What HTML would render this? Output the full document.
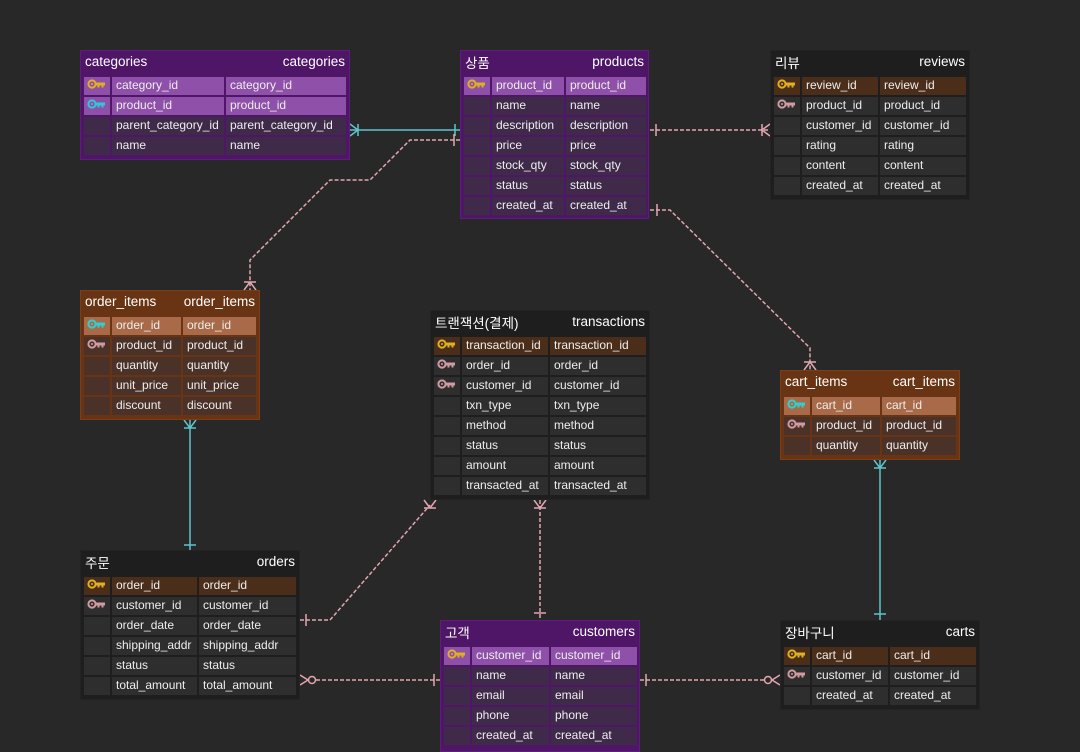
<!DOCTYPE html>
<html><head><meta charset="utf-8"><style>
*{margin:0;padding:0;box-sizing:border-box}
body{width:1080px;height:752px;background:#282828;position:relative;overflow:hidden;font-family:"Liberation Sans","Noto Sans CJK KR",sans-serif;font-size:12px;color:#eee}
.t{position:absolute;padding:0 3px 3px 3px}
.h{height:24px;display:flex;justify-content:space-between;align-items:center;font-size:13.5px;color:#fff;padding:0 1px 3px 1px;margin-bottom:2px}
.r{display:grid;gap:2px;height:18px;margin-bottom:2px}
.r div{line-height:16px;padding-left:4px;white-space:nowrap;overflow:hidden}
.r div:first-child{padding-left:3px;padding-top:1px}
.P{background:#4f1668;border:1px solid #5e1c7c}
.P .r div{background:#3f2a4a}
.P .r.k div{background:#8e50a8}
.D{background:#1e1e1e;border:1px solid #232323}
.D .r div{background:#2e2e2e}
.D .r.k div{background:#4a2e1a}
.O{background:#693413;border:1px solid #7a3e18}
.O .r div{background:#4a3229}
.O .r.k div{background:#a86a48}
svg.ln{position:absolute;left:0;top:0}
</style></head><body>
<svg width="0" height="0" style="position:absolute"><defs>
<symbol id="key" viewBox="0 0 20 12"><circle cx="5" cy="6" r="3.6" fill="none" stroke="currentColor" stroke-width="2"/><circle cx="5" cy="6" r="1" fill="currentColor"/><path d="M8.5 4.5H18V7.5H16.5V9.5H14.5V7.5H12.5V9.5H10.5V7.5H8.5Z" fill="currentColor"/></symbol>
</defs></svg>

<svg class="ln" width="1080" height="752" fill="none" stroke-width="1.5">
<g stroke="#5ec4cc">
<path d="M350 130H460"/><path d="M455 124V136"/><path d="M358 130L350 124M358 130L350 136M358 124V136"/>
<path d="M190 420V550"/><path d="M184 545H196"/><path d="M190 428L184 420M190 428L196 420M184 428H196"/>
<path d="M880 460V620"/><path d="M874 614H886"/><path d="M880 468L874 460M880 468L886 460M874 468H886"/>
</g>
<g stroke="#e2a6b0">
<path d="M460 140H410L370 180H330L250 260V290" stroke-dasharray="4 2"/><path d="M454 134V146"/><path d="M250 282L244 290M250 282L256 290M244 282H256"/>
<path d="M650 130H770" stroke-dasharray="4 2"/><path d="M656 124V136"/><path d="M762 130L770 124M762 130L770 136M762 124V136"/>
<path d="M650 210H670L810 348V370" stroke-dasharray="4 2"/><path d="M657 204V216"/><path d="M810 362L804 370M810 362L816 370M804 362H816"/>
<path d="M300 620H330L430 505" stroke-dasharray="4 2"/><path d="M306 614V626"/><path d="M430 508L424 500M430 508L436 500M424 508H436"/>
<path d="M540 500V620" stroke-dasharray="4 2"/><path d="M534 613H546"/><path d="M540 508L534 500M540 508L546 500M534 508H546"/>
<path d="M316 680H440" stroke-dasharray="4 2"/><path d="M434 674V686"/><circle cx="312" cy="680" r="3.5"/><path d="M308 680L300 675M308 680L300 685"/>
<path d="M640 680H764" stroke-dasharray="4 2"/><path d="M646 674V686"/><circle cx="768" cy="680" r="3.5"/><path d="M772 680L780 675M772 680L780 685"/>
</g>
</svg>

<!-- categories -->
<div class="t P" style="left:80px;top:50px;width:270px;height:110px">
<div class="h"><span>categories</span><span>categories</span></div>
<div class="r k" style="grid-template-columns:26px 112px 120px"><div><svg width="20" height="12" style="color:#e0b020"><use href="#key"/></svg></div><div>category_id</div><div>category_id</div></div>
<div class="r k" style="grid-template-columns:26px 112px 120px"><div><svg width="20" height="12" style="color:#30c8d8"><use href="#key"/></svg></div><div>product_id</div><div>product_id</div></div>
<div class="r" style="grid-template-columns:26px 112px 120px"><div></div><div>parent_category_id</div><div>parent_category_id</div></div>
<div class="r" style="grid-template-columns:26px 112px 120px"><div></div><div>name</div><div>name</div></div>
</div>

<!-- products -->
<div class="t P" style="left:460px;top:50px;width:189px;height:169px">
<div class="h"><span>상품</span><span>products</span></div>
<div class="r k" style="grid-template-columns:26px 72px 80px"><div><svg width="20" height="12" style="color:#e0b020"><use href="#key"/></svg></div><div>product_id</div><div>product_id</div></div>
<div class="r" style="grid-template-columns:26px 72px 80px"><div></div><div>name</div><div>name</div></div>
<div class="r" style="grid-template-columns:26px 72px 80px"><div></div><div>description</div><div>description</div></div>
<div class="r" style="grid-template-columns:26px 72px 80px"><div></div><div>price</div><div>price</div></div>
<div class="r" style="grid-template-columns:26px 72px 80px"><div></div><div>stock_qty</div><div>stock_qty</div></div>
<div class="r" style="grid-template-columns:26px 72px 80px"><div></div><div>status</div><div>status</div></div>
<div class="r" style="grid-template-columns:26px 72px 80px"><div></div><div>created_at</div><div>created_at</div></div>
</div>

<!-- reviews -->
<div class="t D" style="left:770px;top:50px;width:200px;height:150px">
<div class="h"><span>리뷰</span><span>reviews</span></div>
<div class="r k" style="grid-template-columns:26px 76px 86px"><div><svg width="20" height="12" style="color:#e0b020"><use href="#key"/></svg></div><div>review_id</div><div>review_id</div></div>
<div class="r" style="grid-template-columns:26px 76px 86px"><div><svg width="20" height="12" style="color:#d09aa2"><use href="#key"/></svg></div><div>product_id</div><div>product_id</div></div>
<div class="r" style="grid-template-columns:26px 76px 86px"><div></div><div>customer_id</div><div>customer_id</div></div>
<div class="r" style="grid-template-columns:26px 76px 86px"><div></div><div>rating</div><div>rating</div></div>
<div class="r" style="grid-template-columns:26px 76px 86px"><div></div><div>content</div><div>content</div></div>
<div class="r" style="grid-template-columns:26px 76px 86px"><div></div><div>created_at</div><div>created_at</div></div>
</div>

<!-- order_items -->
<div class="t O" style="left:80px;top:290px;width:180px;height:130px">
<div class="h"><span>order_items</span><span>order_items</span></div>
<div class="r k" style="grid-template-columns:26px 69px 73px"><div><svg width="20" height="12" style="color:#30d0d0"><use href="#key"/></svg></div><div>order_id</div><div>order_id</div></div>
<div class="r" style="grid-template-columns:26px 69px 73px"><div><svg width="20" height="12" style="color:#d09aa2"><use href="#key"/></svg></div><div>product_id</div><div>product_id</div></div>
<div class="r" style="grid-template-columns:26px 69px 73px"><div></div><div>quantity</div><div>quantity</div></div>
<div class="r" style="grid-template-columns:26px 69px 73px"><div></div><div>unit_price</div><div>unit_price</div></div>
<div class="r" style="grid-template-columns:26px 69px 73px"><div></div><div>discount</div><div>discount</div></div>
</div>

<!-- transactions -->
<div class="t D" style="left:430px;top:310px;width:220px;height:190px">
<div class="h"><span>트랜잭션(결제)</span><span>transactions</span></div>
<div class="r k" style="grid-template-columns:26px 86px 96px"><div><svg width="20" height="12" style="color:#e0b020"><use href="#key"/></svg></div><div>transaction_id</div><div>transaction_id</div></div>
<div class="r" style="grid-template-columns:26px 86px 96px"><div><svg width="20" height="12" style="color:#d09aa2"><use href="#key"/></svg></div><div>order_id</div><div>order_id</div></div>
<div class="r" style="grid-template-columns:26px 86px 96px"><div><svg width="20" height="12" style="color:#d09aa2"><use href="#key"/></svg></div><div>customer_id</div><div>customer_id</div></div>
<div class="r" style="grid-template-columns:26px 86px 96px"><div></div><div>txn_type</div><div>txn_type</div></div>
<div class="r" style="grid-template-columns:26px 86px 96px"><div></div><div>method</div><div>method</div></div>
<div class="r" style="grid-template-columns:26px 86px 96px"><div></div><div>status</div><div>status</div></div>
<div class="r" style="grid-template-columns:26px 86px 96px"><div></div><div>amount</div><div>amount</div></div>
<div class="r" style="grid-template-columns:26px 86px 96px"><div></div><div>transacted_at</div><div>transacted_at</div></div>
</div>

<!-- cart_items -->
<div class="t O" style="left:780px;top:370px;width:180px;height:90px">
<div class="h"><span>cart_items</span><span>cart_items</span></div>
<div class="r k" style="grid-template-columns:26px 68px 74px"><div><svg width="20" height="12" style="color:#30d0d0"><use href="#key"/></svg></div><div>cart_id</div><div>cart_id</div></div>
<div class="r" style="grid-template-columns:26px 68px 74px"><div><svg width="20" height="12" style="color:#d09aa2"><use href="#key"/></svg></div><div>product_id</div><div>product_id</div></div>
<div class="r" style="grid-template-columns:26px 68px 74px"><div></div><div>quantity</div><div>quantity</div></div>
</div>

<!-- orders -->
<div class="t D" style="left:80px;top:550px;width:220px;height:150px">
<div class="h"><span>주문</span><span>orders</span></div>
<div class="r k" style="grid-template-columns:26px 85px 97px"><div><svg width="20" height="12" style="color:#e0b020"><use href="#key"/></svg></div><div>order_id</div><div>order_id</div></div>
<div class="r" style="grid-template-columns:26px 85px 97px"><div><svg width="20" height="12" style="color:#d09aa2"><use href="#key"/></svg></div><div>customer_id</div><div>customer_id</div></div>
<div class="r" style="grid-template-columns:26px 85px 97px"><div></div><div>order_date</div><div>order_date</div></div>
<div class="r" style="grid-template-columns:26px 85px 97px"><div></div><div>shipping_addr</div><div>shipping_addr</div></div>
<div class="r" style="grid-template-columns:26px 85px 97px"><div></div><div>status</div><div>status</div></div>
<div class="r" style="grid-template-columns:26px 85px 97px"><div></div><div>total_amount</div><div>total_amount</div></div>
</div>

<!-- customers -->
<div class="t P" style="left:440px;top:620px;width:200px;height:132px">
<div class="h"><span>고객</span><span>customers</span></div>
<div class="r k" style="grid-template-columns:26px 77px 86px"><div><svg width="20" height="12" style="color:#e0b020"><use href="#key"/></svg></div><div>customer_id</div><div>customer_id</div></div>
<div class="r" style="grid-template-columns:26px 77px 86px"><div></div><div>name</div><div>name</div></div>
<div class="r" style="grid-template-columns:26px 77px 86px"><div></div><div>email</div><div>email</div></div>
<div class="r" style="grid-template-columns:26px 77px 86px"><div></div><div>phone</div><div>phone</div></div>
<div class="r" style="grid-template-columns:26px 77px 86px"><div></div><div>created_at</div><div>created_at</div></div>
</div>

<!-- carts -->
<div class="t D" style="left:780px;top:620px;width:200px;height:90px">
<div class="h"><span>장바구니</span><span>carts</span></div>
<div class="r k" style="grid-template-columns:26px 76px 86px"><div><svg width="20" height="12" style="color:#e0b020"><use href="#key"/></svg></div><div>cart_id</div><div>cart_id</div></div>
<div class="r" style="grid-template-columns:26px 76px 86px"><div><svg width="20" height="12" style="color:#d09aa2"><use href="#key"/></svg></div><div>customer_id</div><div>customer_id</div></div>
<div class="r" style="grid-template-columns:26px 76px 86px"><div></div><div>created_at</div><div>created_at</div></div>
</div>
</body></html>
